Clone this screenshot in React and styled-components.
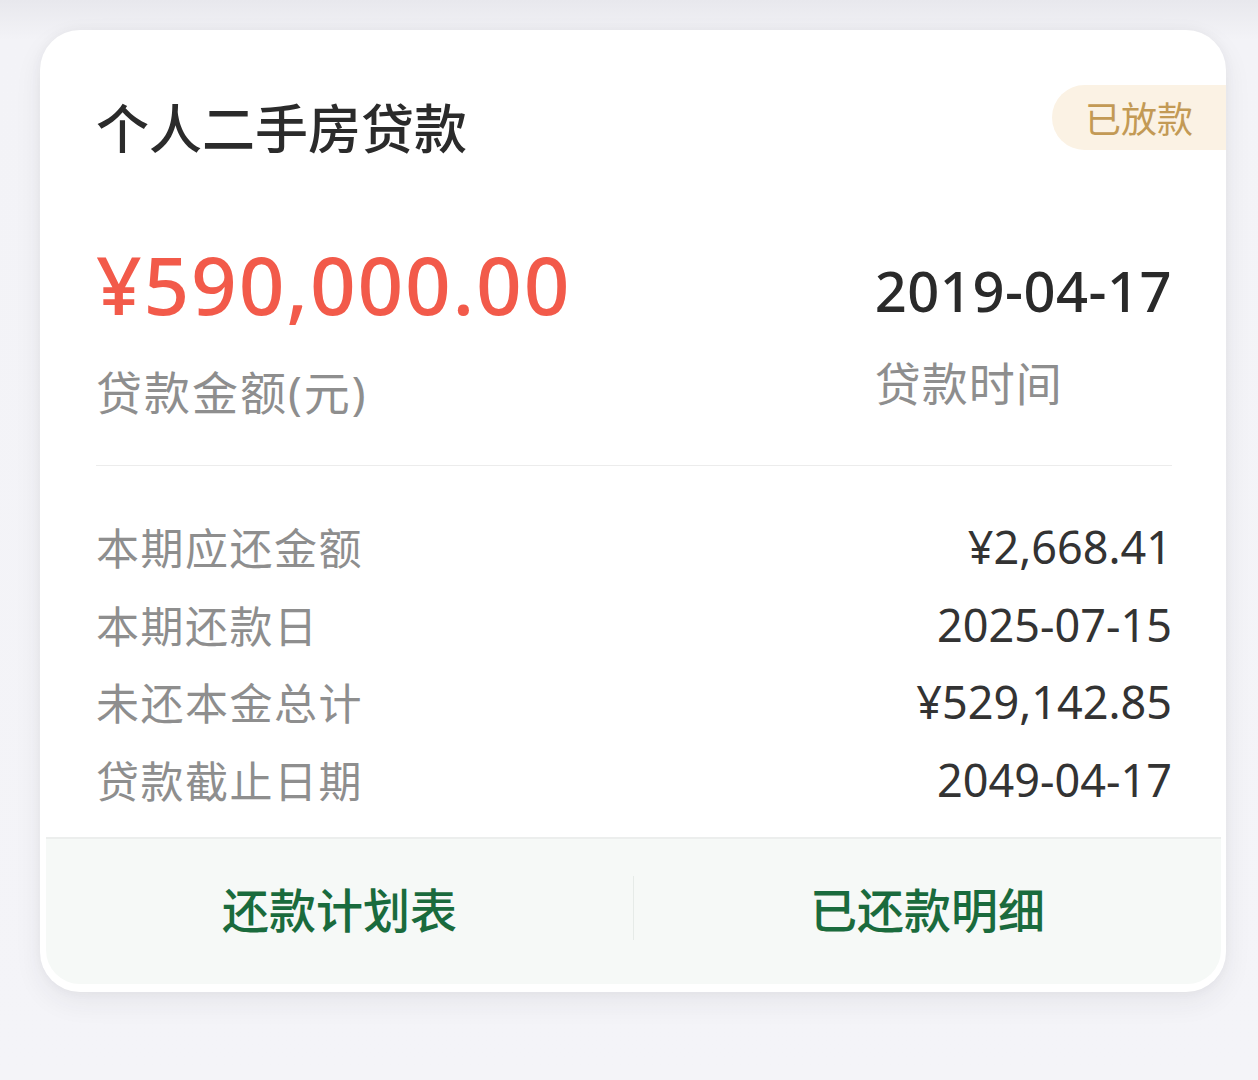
import styled, { createGlobalStyle } from "styled-components"

const GlobalStyle = createGlobalStyle`
body {
  margin: 0;
  background: linear-gradient(#e8e8ed 0, #f3f3f7 40px, #f4f4f8 100%);
  font-family: "Noto Sans", "Noto Sans CJK SC", sans-serif;
}
`

const Page = styled.div`
  min-height: 1080px;
  padding: 30px 32px 0 40px;
  box-sizing: border-box;
`

const Card = styled.div`
  position: relative;
  overflow: hidden;
  width: 1186px;
  background: #fff;
  border-radius: 40px;
  box-shadow: 0 10px 28px rgba(40, 40, 60, 0.07), 0 0 12px rgba(40, 40, 60, 0.04);
  padding: 67px 0 8px;
  box-sizing: border-box;
`

const Body = styled.div`
  padding: 0 54px 0 56px;
`

const Title = styled.div`
  font-size: 53px;
  line-height: 64px;
  font-weight: 500;
  color: #2b2b2b;
`

const Badge = styled.div`
  position: absolute;
  top: 55px;
  right: 0;
  height: 65px;
  padding: 0 33px;
  display: flex;
  align-items: center;
  background: #fbf2e4;
  color: #c39a55;
  font-size: 36px;
  border-radius: 33px 0 0 33px;
`

const Summary = styled.div`
  display: flex;
  justify-content: space-between;
  align-items: flex-start;
  margin-top: 84px;
`

const Column = styled.div`
  display: flex;
  flex-direction: column;
  align-items: flex-start;
  margin-top: ${(p) => p.$offset || 0}px;
`

const Amount = styled.div`
  font-size: 80px;
  line-height: 78px;
  font-weight: 500;
  letter-spacing: 1.8px;
  color: #f25a4a;
`

const DateValue = styled.div`
  font-size: 56px;
  line-height: 1;
  font-weight: 500;
  letter-spacing: 0.5px;
  color: #2a2a2a;
`

const Caption = styled.div`
  font-size: 46px;
  line-height: 56px;
  letter-spacing: ${(p) => p.$spacing || 1}px;
  color: #8e8e8e;
  margin-top: ${(p) => p.$gap}px;
`

const Divider = styled.div`
  height: 1px;
  background: #ececec;
  margin: 45px 0 42px;
`

const Row = styled.div`
  display: flex;
  justify-content: space-between;
  align-items: center;
  height: 77.5px;
`

const RowLabel = styled.span`
  font-size: 43px;
  letter-spacing: 1.5px;
  color: #8e8e8e;
`

const RowValue = styled.span`
  font-size: 45px;
  color: #333;
`

const Footer = styled.div`
  display: flex;
  align-items: center;
  margin: 19px 5px 0 6px;
  height: 147px;
  padding-bottom: 8px;
  box-sizing: border-box;
  background: #f6f9f7;
  border-top: 2px solid #eceeed;
  border-radius: 0 0 34px 34px;
`

const Action = styled.div`
  flex: 1;
  text-align: center;
  font-size: 47px;
  font-weight: 500;
  color: #1a6b3d;
`

const Separator = styled.div`
  width: 1px;
  height: 64px;
  background: #e6ebe8;
`

const rows = [
  ["本期应还金额", "¥2,668.41"],
  ["本期还款日", "2025-07-15"],
  ["未还本金总计", "¥529,142.85"],
  ["贷款截止日期", "2049-04-17"],
]

export default function App() {
  return (
    <>
      <GlobalStyle />
      <Page>
        <Card>
          <Badge>已放款</Badge>
          <Body>
            <Title>个人二手房贷款</Title>
            <Summary>
              <Column>
                <Amount>¥590,000.00</Amount>
                <Caption $gap={41} $spacing={2}>贷款金额(元)</Caption>
              </Column>
              <Column $offset={17}>
                <DateValue>2019-04-17</DateValue>
                <Caption $gap={37}>贷款时间</Caption>
              </Column>
            </Summary>
            <Divider />
            {rows.map(([label, value]) => (
              <Row key={label}>
                <RowLabel>{label}</RowLabel>
                <RowValue>{value}</RowValue>
              </Row>
            ))}
          </Body>
          <Footer>
            <Action>还款计划表</Action>
            <Separator />
            <Action>已还款明细</Action>
          </Footer>
        </Card>
      </Page>
    </>
  )
}
